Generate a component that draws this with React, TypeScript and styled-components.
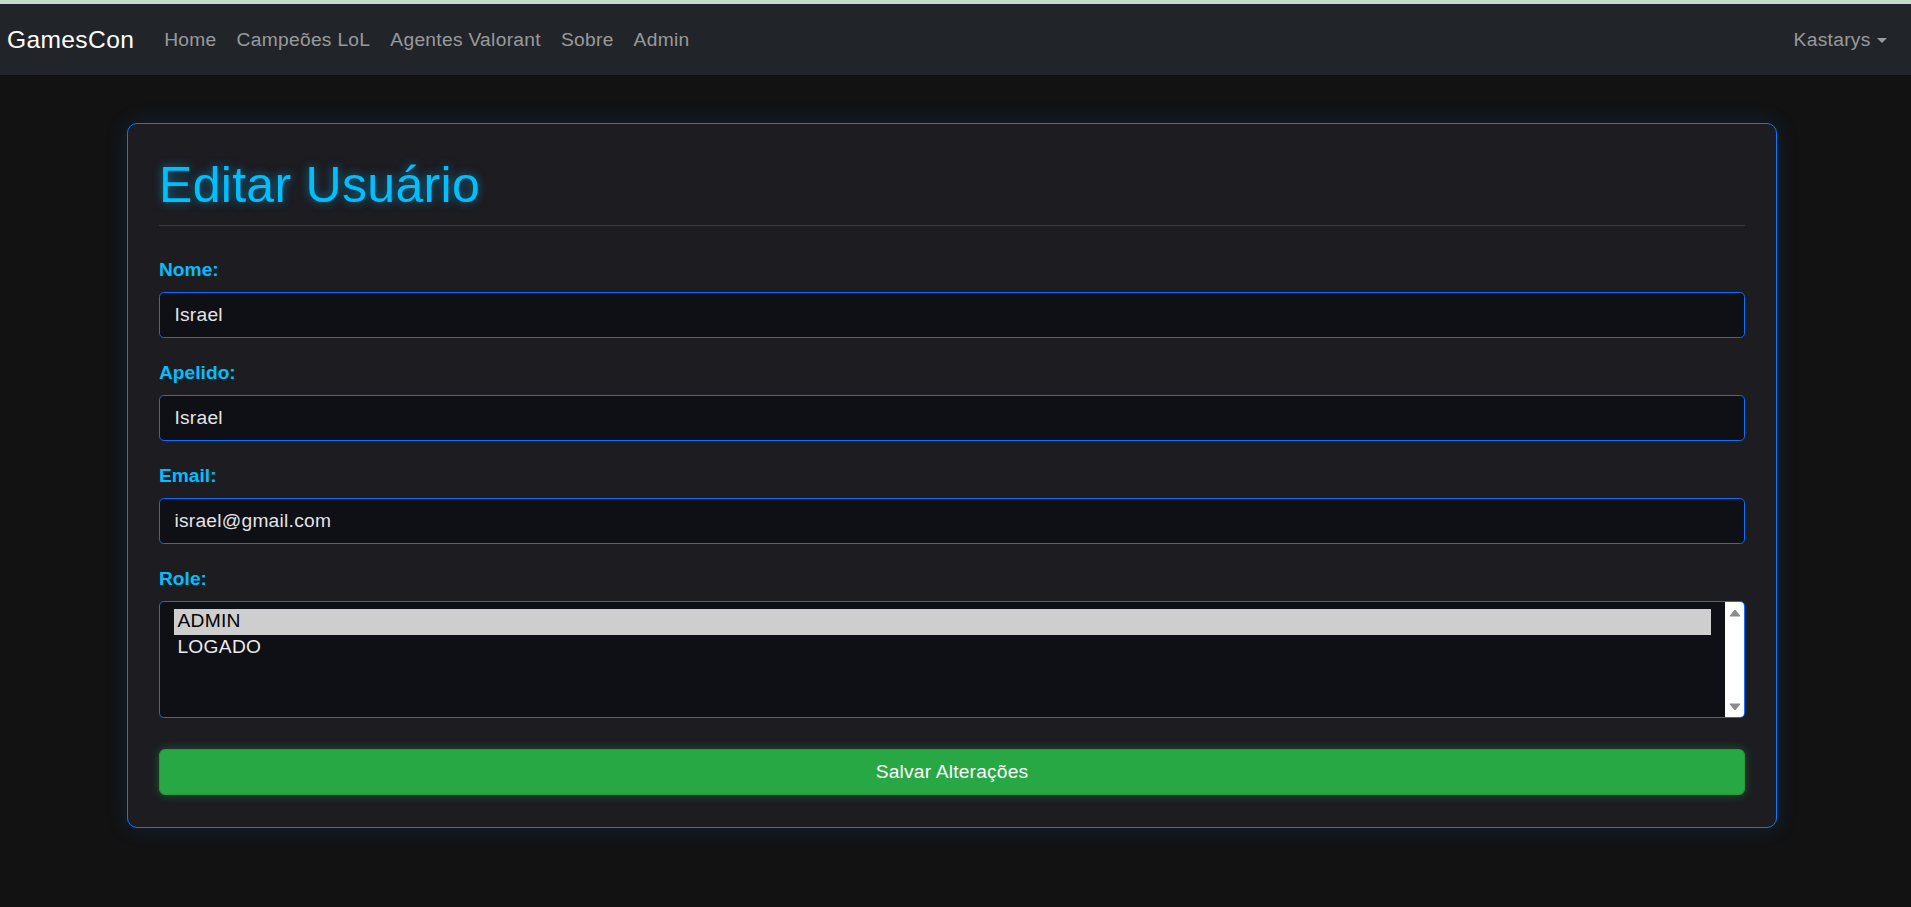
import React from "react";
import styled, { createGlobalStyle } from "styled-components";

const GlobalStyle = createGlobalStyle`
  html, body {
    margin: 0;
    padding: 0;
    background: #121212;
    font-family: "Liberation Sans", Arial, Helvetica, sans-serif;
  }
  * { box-sizing: border-box; }
`;

const Page = styled.div`
  min-height: 907px;
  background: #121212;
`;

const TopStripe = styled.div`
  height: 4px;
  background: #c3dec6;
`;

const Navbar = styled.nav`
  height: 71px;
  background: #212529;
  display: flex;
  align-items: center;
  padding: 1px 14.4px 0 7px;
`;

const Brand = styled.a`
  font-size: 24.6px;
  letter-spacing: 0.35px;
  color: #ffffff;
  text-decoration: none;
  margin-right: 20px;
  white-space: nowrap;
`;

const NavList = styled.div`
  display: flex;
  align-items: center;
`;

const NavLink = styled.a`
  font-size: 19.2px;
  letter-spacing: 0.3px;
  line-height: 28.8px;
  color: rgba(255, 255, 255, 0.55);
  padding: 0 10px;
  text-decoration: none;
  white-space: nowrap;
  display: flex;
  align-items: center;
`;

const UserMenu = styled(NavLink)`
  margin-left: auto;
`;

const Caret = styled.span`
  display: inline-block;
  margin-left: 6px;
  width: 0;
  height: 0;
  border-top: 5.8px solid rgba(255, 255, 255, 0.55);
  border-left: 5.8px solid transparent;
  border-right: 5.8px solid transparent;
  margin-top: 2px;
`;

const Main = styled.main`
  padding: 48px 0 0 127px;
`;

const Card = styled.section`
  width: 1650px;
  background: #1c1c21;
  border: 1px solid #0b78ff;
  border-radius: 10px;
  padding: 31px 31px 32px;
  box-shadow: 0 0 22px rgba(0, 123, 255, 0.16);
`;

const Title = styled.h1`
  margin: 0 0 30px;
  font-size: 50px;
  letter-spacing: 0.3px;
  line-height: 60px;
  font-weight: 400;
  color: #00bfff;
  text-shadow: 0 0 10px rgba(0, 191, 255, 0.55);
  padding-bottom: 10px;
  border-bottom: 1px solid #1a4658;
`;

const FormGroup = styled.div`
  margin-bottom: 21.4px;
`;

const Label = styled.label`
  display: block;
  font-size: 19.2px;
  line-height: 28.8px;
  font-weight: 700;
  color: #00bfff;
  margin-bottom: 7.2px;
`;

const TextInput = styled.input`
  display: block;
  width: 100%;
  height: 45.6px;
  padding: 7.2px 14.4px;
  font-family: "Liberation Sans", Arial, sans-serif;
  font-size: 19.2px;
  letter-spacing: 0.25px;
  line-height: 28.8px;
  color: #e4e4e4;
  background: #0f0f16;
  border: 1px solid #0d6efd;
  border-radius: 4.8px;
  outline: none;
`;

const ListBox = styled.div`
  display: flex;
  height: 117px;
  background: #0f0f16;
  border: 1px solid #0d6efd;
  border-radius: 4.8px;
  overflow: hidden;
`;

const OptionList = styled.div`
  flex: 1;
  padding: 7px 14.4px;
`;

const Option = styled.div<{ $selected?: boolean }>`
  font-size: 19.2px;
  letter-spacing: 0.3px;
  line-height: 22px;
  padding: 1px 3px 3px;
  color: ${(p) => (p.$selected ? "#000000" : "#ececec")};
  background: ${(p) => (p.$selected ? "#cecece" : "transparent")};
`;

const ScrollTrack = styled.div`
  width: 19px;
  background: #ffffff;
  display: flex;
  flex-direction: column;
  justify-content: space-between;
  align-items: center;
  padding: 7px 0 6px;
`;

const SubmitButton = styled.button`
  display: block;
  width: 100%;
  height: 46.4px;
  margin-top: 31px;
  font-family: "Liberation Sans", Arial, sans-serif;
  font-size: 19.2px;
  letter-spacing: 0.2px;
  color: #ffffff;
  background: #28a745;
  border: 1px solid #25983f;
  border-radius: 6px;
  box-shadow: 0 0 10px rgba(40, 167, 69, 0.45);
  cursor: pointer;
`;

const Arrow = ({ down }: { down?: boolean }) => (
  <svg width="12" height="8" viewBox="0 0 12 8">
    <path
      d={down ? "M1 1 L11 1 L6 7 Z" : "M1 7 L11 7 L6 1 Z"}
      fill="#8a8a8a"
      stroke="#8a8a8a"
      strokeWidth="1"
      strokeLinejoin="round"
    />
  </svg>
);

export default function App() {
  return (
    <Page>
      <GlobalStyle />
      <TopStripe />
      <Navbar>
        <Brand href="#">GamesCon</Brand>
        <NavList>
          <NavLink href="#">Home</NavLink>
          <NavLink href="#">Campeões LoL</NavLink>
          <NavLink href="#">Agentes Valorant</NavLink>
          <NavLink href="#">Sobre</NavLink>
          <NavLink href="#">Admin</NavLink>
        </NavList>
        <UserMenu href="#">
          Kastarys
          <Caret />
        </UserMenu>
      </Navbar>
      <Main>
        <Card>
          <Title>Editar Usuário</Title>
          <FormGroup>
            <Label>Nome:</Label>
            <TextInput defaultValue="Israel" />
          </FormGroup>
          <FormGroup>
            <Label>Apelido:</Label>
            <TextInput defaultValue="Israel" />
          </FormGroup>
          <FormGroup>
            <Label>Email:</Label>
            <TextInput defaultValue="israel@gmail.com" />
          </FormGroup>
          <FormGroup>
            <Label>Role:</Label>
            <ListBox role="listbox">
              <OptionList>
                <Option $selected>ADMIN</Option>
                <Option>LOGADO</Option>
              </OptionList>
              <ScrollTrack>
                <Arrow />
                <Arrow down />
              </ScrollTrack>
            </ListBox>
          </FormGroup>
          <SubmitButton type="button">Salvar Alterações</SubmitButton>
        </Card>
      </Main>
    </Page>
  );
}
